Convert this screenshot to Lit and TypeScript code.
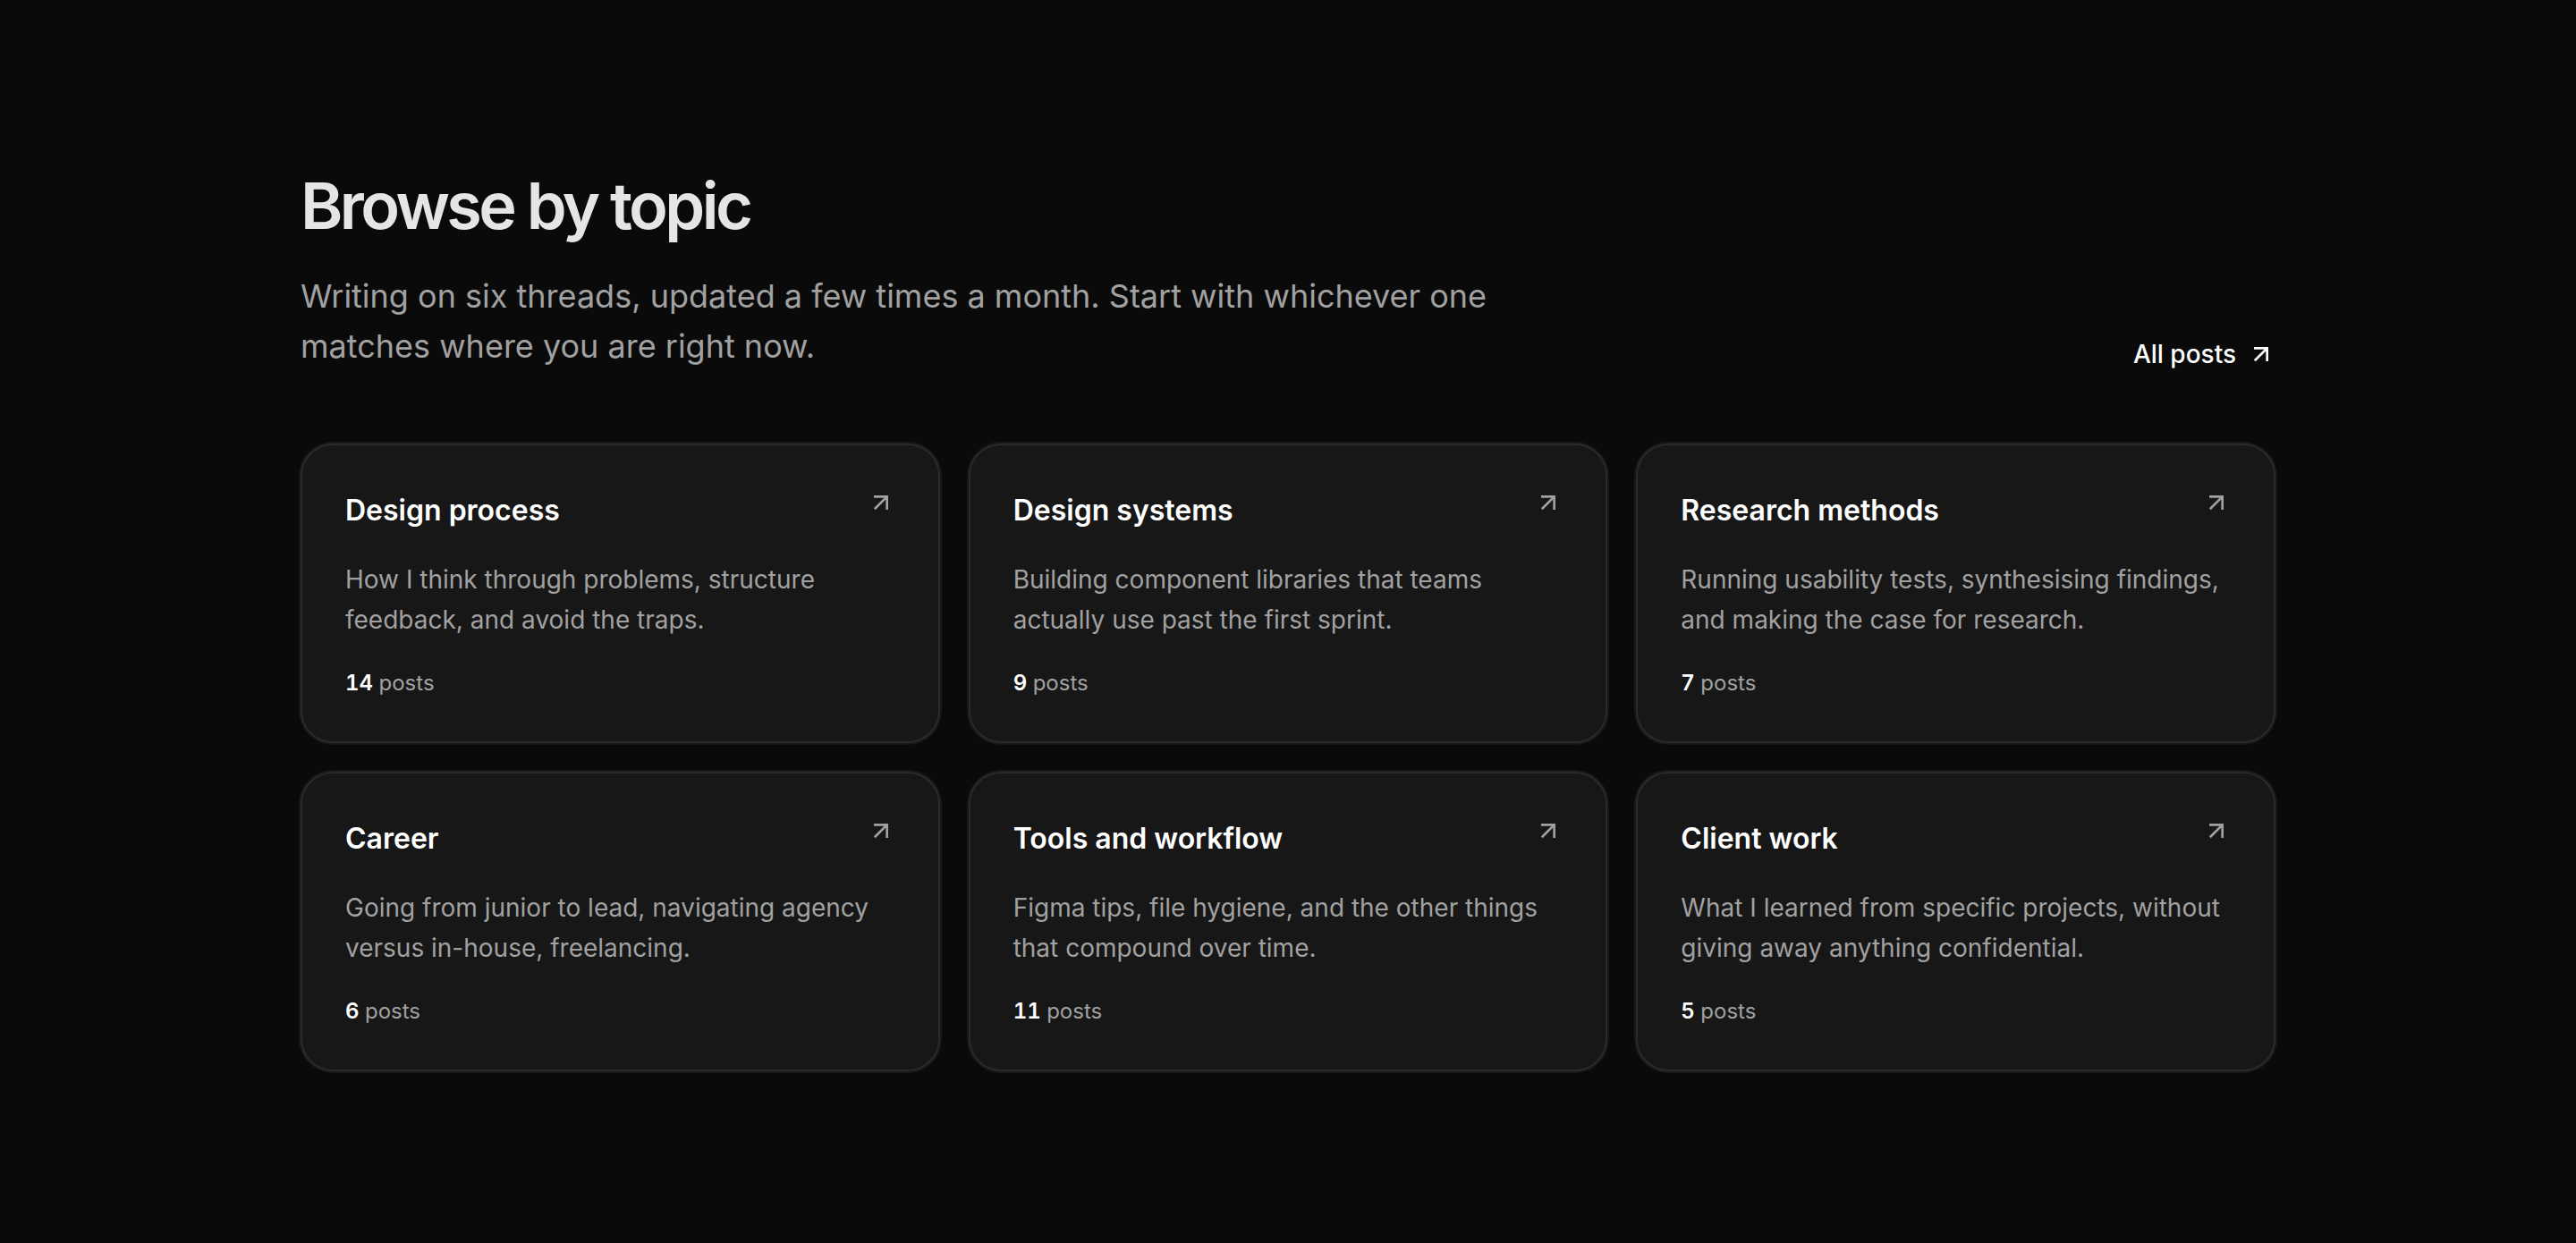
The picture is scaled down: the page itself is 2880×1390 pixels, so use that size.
import { LitElement, html, css } from 'lit';
import { customElement, property } from 'lit/decorators.js';

interface Topic {
	slug: string;
	title: string;
	description: string;
	posts: number;
}

const topics: Topic[] = [
	{ slug: 'design-process', title: 'Design process', description: 'How I think through problems, structure feedback, and avoid the traps.', posts: 14 },
	{ slug: 'design-systems', title: 'Design systems', description: 'Building component libraries that teams actually use past the first sprint.', posts: 9 },
	{ slug: 'research-methods', title: 'Research methods', description: 'Running usability tests, synthesising findings, and making the case for research.', posts: 7 },
	{ slug: 'career', title: 'Career', description: 'Going from junior to lead, navigating agency versus in-house, freelancing.', posts: 6 },
	{ slug: 'tools-and-workflow', title: 'Tools and workflow', description: 'Figma tips, file hygiene, and the other things that compound over time.', posts: 11 },
	{ slug: 'client-work', title: 'Client work', description: 'What I learned from specific projects, without giving away anything confidential.', posts: 5 }
];

@customElement('arrow-icon')
class ArrowIcon extends LitElement {
	static styles = css`
		:host {
			display: block;
			flex: none;
			width: 32px;
			height: 32px;
		}

		.icon {
			display: block;
			width: 100%;
			height: 100%;
		}
	`;

	render() {
		return html`
			<svg class="icon" viewBox="0 0 24 24" fill="none" stroke="currentColor" stroke-width="2" stroke-linejoin="miter" aria-hidden="true">
				<path d="M6.6 17.4L17 7M6 7h11v11"></path>
			</svg>
		`;
	}
}

@customElement('topic-card')
class TopicCard extends LitElement {
	static styles = css`
		:host {
			display: grid;
		}

		.card {
			display: flex;
			flex-direction: column;
			padding: 48px;
			border: 2px solid #2a2a2a;
			border-radius: 36px;
			background: #171717;
			box-shadow: 0 0 0 2px rgba(255, 255, 255, 0.06);
			color: #a1a1a1;
			text-decoration: none;
		}

		.head {
			display: flex;
			align-items: flex-start;
			justify-content: space-between;
			gap: 24px;
		}

		.title {
			margin: 0;
			font-size: 32px;
			font-weight: 600;
			line-height: 50px;
			color: #fff;
		}

		.description {
			margin: 30px 0;
			font-size: 28px;
			line-height: 45px;
		}

		.count {
			margin: auto 0 0;
			font-size: 24px;
			line-height: 35px;
			font-variant-numeric: tabular-nums;
		}

		.number {
			font-weight: 600;
			color: #fff;
		}
	`;

	@property({ attribute: false }) topic!: Topic;

	render() {
		const { slug, title, description, posts } = this.topic;
		return html`
			<a class="card" href="#${slug}">
				<div class="head">
					<h3 class="title">${title}</h3>
					<arrow-icon></arrow-icon>
				</div>
				<p class="description">${description}</p>
				<p class="count"><span class="number">${posts}</span> posts</p>
			</a>
		`;
	}
}

@customElement('app-root')
class AppRoot extends LitElement {
	static styles = css`
		:host {
			display: block;
			box-sizing: border-box;
			min-height: 100vh;
			padding: 192px 96px;
			background: #0a0a0a;
			font-family: Inter, "Liberation Sans", sans-serif;
			color: #a1a1a1;
		}

		.section {
			max-width: 2208px;
			margin: 0 auto;
		}

		.header {
			display: flex;
			align-items: flex-end;
			justify-content: space-between;
			gap: 64px;
			margin-bottom: 81px;
		}

		.heading {
			margin: 0 0 35px;
			font-size: 72px;
			font-weight: 600;
			line-height: 76px;
			letter-spacing: -0.05em;
			color: #e5e5e5;
		}

		.intro {
			max-width: 1400px;
			margin: 0;
			font-size: 36px;
			line-height: 56px;
		}

		.all {
			display: flex;
			align-items: center;
			gap: 12px;
			flex: none;
			font-size: 28px;
			font-weight: 500;
			line-height: 38px;
			color: #fff;
			text-decoration: none;
		}

		.grid {
			display: grid;
			grid-template-columns: repeat(3, minmax(0, 1fr));
			gap: 32px;
			margin: 0;
			padding: 0;
			list-style: none;
		}

		.item {
			display: grid;
		}
	`;

	render() {
		return html`
			<section class="section" aria-labelledby="heading">
				<header class="header">
					<div>
						<h2 class="heading" id="heading">Browse by topic</h2>
						<p class="intro">Writing on six threads, updated a few times a month. Start with whichever one matches where you are right now.</p>
					</div>
					<a class="all" href="#posts">All posts <arrow-icon></arrow-icon></a>
				</header>
				<ul class="grid">
					${topics.map(topic => html`<li class="item"><topic-card .topic=${topic}></topic-card></li>`)}
				</ul>
			</section>
		`;
	}
}
